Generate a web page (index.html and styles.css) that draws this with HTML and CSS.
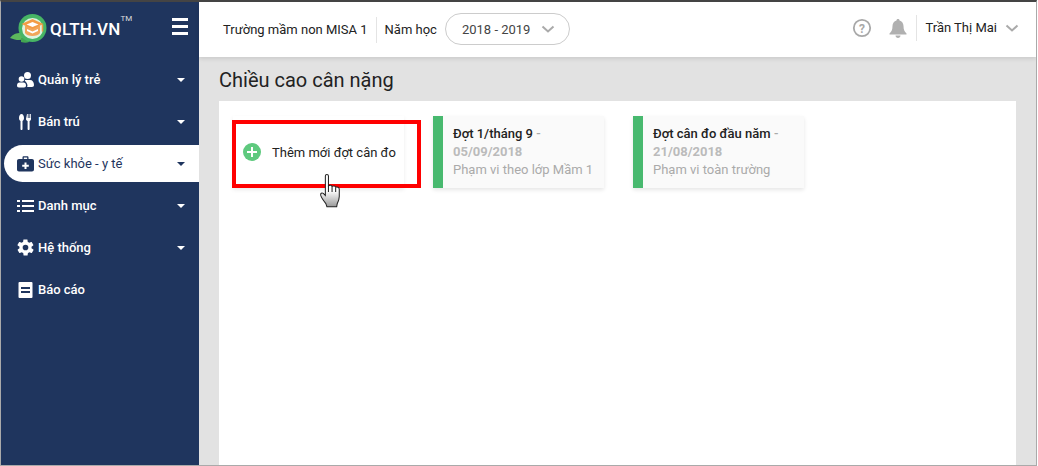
FILE: index.html
```html
<!DOCTYPE html>
<html lang="en">
<head>
  <meta charset="UTF-8" />
  <title>Chiều cao cân nặng</title>
  <link rel="stylesheet" href="styles.css">
</head>
<body>

<div class="window">
  <aside class="sidebar">
    <div class="brand">
      <svg class="logo" width="38" height="30" viewBox="0 0 38 30">
        <path d="M0 24c3-4 6-5 11-5l3 6c-4 2-9 1-14-1z" fill="#5cb85c"/>
        <path d="M11 28c3 1 6 1 8 0l-1-5-7 1z" fill="#43a651"/>
        <circle cx="22.500" cy="14" r="14" fill="#47b565"/>
        <circle cx="22.500" cy="14.500" r="10.500" fill="#dff3e2"/>
        <path d="M15 12h15v7c-2 4-13 4-15 0z" fill="#f2a65a"/>
        <path d="M22.500 5l11 5-11 5-11-5z" fill="#f39c45"/>
        <path d="M22.500 8l6 2.500-6 2.500-6-2.500z" fill="#fff"/>
        <path d="M17 15l5.500 2.500L28 15v2l-5.500 2.500L17 17z" fill="#fff"/>
        <path d="M32.500 10.500v7" stroke="#f39c45" stroke-width="1.500"/>
      </svg>
      <span class="brand-name">QLTH.VN</span>
      <span class="brand-tm">TM</span>
      <span class="burger"><i></i><i></i><i></i></span>
    </div>
    <nav class="menu">
      <a class="menu-item">
        <svg class="menu-icon" width="17" height="16" viewBox="0 0 17 16" fill="#fff">
          <circle cx="10.500" cy="3.500" r="3.500"/><circle cx="4.500" cy="7" r="2.800"/>
          <path d="M7 15.500H2c-1.500 0-2-.8-2-2 0-2 1-3 2.500-3h4c1.500 0 2.500 1 2.500 3 0 1-.6 2-2 2z"/>
          <path d="M10 15h5c1.300 0 2-.8 2-2 0-3-1.500-5-4-5H8.500c-.5 0-1 .5-.5 1 1.500 1 2.500 3 2.500 5z"/>
        </svg>
        <span class="menu-label">Quản lý trẻ</span><b class="caret"></b>
      </a>
      <a class="menu-item">
        <svg class="menu-icon" width="17" height="16" viewBox="0 0 17 16" fill="#fff">
          <path d="M4.500 0C3 0 2 2 2 4c0 1.500.7 2.500 1.500 3v8c0 .6.400 1 1 1s1-.4 1-1V7C6.300 6.500 7 5.500 7 4c0-2-1-4-2.500-4z"/>
          <path d="M10 0h.8v4h.8V0h.8v4h.8V0h.8v5c0 1-.6 1.700-1.400 2v8c0 .6-.4 1-1 1s-1-.4-1-1V7c-.8-.3-1.600-1-1.600-2z"/>
        </svg>
        <span class="menu-label">Bán trú</span><b class="caret"></b>
      </a>
      <a class="menu-item active">
        <svg class="menu-icon" width="17" height="16" viewBox="0 0 17 16">
          <path d="M5.500 3V1.500C5.500.7 6 .3 6.700.3h3.600c.7 0 1.200.4 1.200 1.200V3H15c1.200 0 2 .8 2 2v8.500c0 1.200-.8 2-2 2H2c-1.200 0-2-.8-2-2V5c0-1.200.8-2 2-2zm1.300 0h3.400V1.600H6.800z" fill="#1f355e"/>
          <path d="M7.500 6.500h2v2.300h2.300v2H9.500v2.300h-2v-2.300H5.200v-2h2.300z" fill="#fff"/>
        </svg>
        <span class="menu-label">Sức khỏe - y tế</span><b class="caret"></b>
      </a>
      <a class="menu-item">
        <svg class="menu-icon" width="17" height="16" viewBox="0 0 17 16" fill="#fff">
          <rect x="0" y="2" width="3" height="2"/><rect x="5" y="2" width="12" height="2"/>
          <rect x="0" y="7" width="3" height="2"/><rect x="5" y="7" width="12" height="2"/>
          <rect x="0" y="12" width="3" height="2"/><rect x="5" y="12" width="12" height="2"/>
        </svg>
        <span class="menu-label">Danh mục</span><b class="caret"></b>
      </a>
      <a class="menu-item">
        <svg class="menu-icon" width="17" height="17" viewBox="1.500 1.500 21 21" fill="#fff">
          <path d="M19.400 13c.1-.3.100-.7.100-1s0-.7-.1-1l2.100-1.600c.2-.2.300-.4.100-.7l-2-3.400c-.1-.2-.4-.3-.6-.2l-2.500 1c-.5-.4-1.100-.7-1.700-1l-.4-2.600c0-.3-.2-.5-.5-.5h-4c-.3 0-.5.200-.5.500l-.4 2.600c-.6.300-1.200.6-1.700 1l-2.500-1c-.2-.1-.5 0-.6.200l-2 3.400c-.2.300-.1.500.1.700L4.600 11c-.1.300-.1.700-.1 1s0 .7.100 1l-2.100 1.600c-.2.200-.3.400-.1.700l2 3.400c.1.200.4.300.6.200l2.500-1c.5.400 1.100.7 1.700 1l.4 2.600c0 .3.200.5.500.5h4c.3 0 .5-.2.500-.5l.4-2.600c.6-.3 1.200-.6 1.700-1l2.500 1c.2.100.5 0 .6-.2l2-3.400c.2-.3.100-.5-.1-.7zM12 15.500a3.500 3.500 0 1 1 0-7 3.500 3.500 0 0 1 0 7z"/>
        </svg>
        <span class="menu-label">Hệ thống</span><b class="caret"></b>
      </a>
      <a class="menu-item">
        <svg class="menu-icon" width="17" height="16" viewBox="0 0 17 16">
          <rect x="1.500" y="0" width="14" height="16" rx="1" fill="#fff"/>
          <rect x="4" y="5" width="9" height="2" fill="#1f355e"/>
          <rect x="4" y="9" width="9" height="2" fill="#1f355e"/>
        </svg>
        <span class="menu-label">Báo cáo</span>
      </a>
    </nav>
  </aside>

  <div class="main">
    <header class="topbar">
      <span class="school">Trường mầm non MISA 1</span>
      <span class="year-label">Năm học</span>
      <div class="year-select">
        <span>2018 - 2019</span>
        <svg width="14" height="8" viewBox="0 0 14 8"><path d="M1.500 1.500L7 6.500l5.500-5" fill="none" stroke="#aaa" stroke-width="2"/></svg>
      </div>
      <div class="topbar-right">
        <svg width="20" height="20" viewBox="0 0 20 20">
          <circle cx="10" cy="10" r="8.200" fill="none" stroke="#a8a8a8" stroke-width="1.800"/>
          <text x="10" y="14.500" text-anchor="middle" class="help-mark">?</text>
        </svg>
        <svg class="bell" width="18" height="19" viewBox="0 0 18 19" fill="#b0b0b0">
          <path d="M9 0c1 0 1.500.6 1.500 1.400C13 2 14.500 4.200 14.500 7c0 4 1 5.500 3 7.500v1H.5v-1c2-2 3-3.500 3-7.500 0-2.800 1.500-5 4-5.600C7.500.6 8 0 9 0z"/>
          <path d="M6.500 16.500h5C11.500 18 10.400 19 9 19s-2.500-1-2.500-2.500z"/>
        </svg>
        <span class="user">Trần Thị Mai</span>
        <svg width="14" height="8" viewBox="0 0 14 8"><path d="M1.500 1.500L7 6.500l5.500-5" fill="none" stroke="#aaa" stroke-width="2"/></svg>
      </div>
    </header>

    <div class="content">
      <h1 class="page-title">Chiều cao cân nặng</h1>
      <section class="panel">
        <div class="add-card">
          <span class="plus"></span>
          <span>Thêm mới đợt cân đo</span>
          <div class="highlight"></div>
          <svg class="hand" width="22" height="34" viewBox="0.500 0.500 19 33">
            <defs>
              <linearGradient id="handFill" x1="0" y1="0" x2="0" y2="1">
                <stop offset="0.500" stop-color="#fff"/><stop offset="1" stop-color="#999"/>
              </linearGradient>
            </defs>
            <path d="M5.500 2.500c0-2 3-2 3 0V12c1.500-1 3-.8 3.500.5 1.500-.8 3-.5 3.500.8 1.500-.6 3.500 0 3.500 2v7c0 3-1 5-2 7l-.5 3H7l-1-3c-2-2.500-4-5-5-8-.5-2 1-3 2.500-2l2 2z" fill="url(#handFill)" stroke="#222" stroke-width="1"/>
            <path d="M8.500 12v6M12 12.500V18M15.500 13.500V18" stroke="#222" stroke-width="1" fill="none"/>
          </svg>
        </div>
        <div class="round-card">
          <div class="round-title">Đợt 1/tháng 9 <span class="dash">-</span></div>
          <div class="round-date">05/09/2018</div>
          <div class="round-scope">Phạm vi theo lớp Mầm 1</div>
        </div>
        <div class="round-card">
          <div class="round-title">Đợt cân đo đầu năm <span class="dash">-</span></div>
          <div class="round-date">21/08/2018</div>
          <div class="round-scope">Phạm vi toàn trường</div>
        </div>
      </section>
    </div>
  </div>
</div>

</body>
</html>
```

FILE: styles.css
```css
html, body {
  margin: 0;
  padding: 0;
  background: #fff;
}

body {
  font-family: Roboto, 'Liberation Sans', sans-serif;
  font-size: 13px;
  color: #222;
}

.window {
  display: flex;
  box-sizing: border-box;
  width: 1037px;
  height: 466px;
  overflow: hidden;
  border-top: 2px solid #444;
  border-left: 1px solid #aaa;
  border-right: 1px solid #aaa;
  border-bottom: 1px solid #aaa;
}

.sidebar {
  width: 198px;
  flex-shrink: 0;
  background: #1f355e;
  color: #fff;
}

.brand {
  display: flex;
  align-items: center;
  position: relative;
  height: 55px;
  padding-left: 9px;
}

.logo {
  margin-top: -1px;
}

.brand-name {
  margin-left: 2px;
  margin-top: -2px;
  font-size: 17px;
  font-weight: 500;
  letter-spacing: 0.2px;
}

.brand-tm {
  align-self: flex-start;
  margin-top: 12px;
  font-size: 8px;
  color: #ddd;
}

.burger {
  display: flex;
  flex-direction: column;
  gap: 4px;
  margin-left: auto;
  margin-right: 11px;
  margin-top: -7px;
}

.burger i {
  display: block;
  width: 16px;
  height: 3px;
  background: #fff;
}

.menu {
  padding-top: 4px;
}

.menu-item {
  display: flex;
  align-items: center;
  height: 37px;
  margin: 0 0 5px 3px;
  padding-left: 13px;
  border-radius: 19px 0 0 19px;
  font-size: 13px;
  font-weight: 500;
}

.menu-item.active {
  background: #fff;
  color: #1f355e;
  font-weight: 400;
}

.menu-icon {
  flex-shrink: 0;
  margin-right: 4px;
}

.caret {
  margin-left: auto;
  margin-right: 14px;
  border-left: 4px solid transparent;
  border-right: 4px solid transparent;
  border-top: 4px solid currentColor;
}

.main {
  flex: 1;
  display: flex;
  flex-direction: column;
  min-width: 0;
}

.topbar {
  display: flex;
  align-items: center;
  flex-shrink: 0;
  height: 55px;
  padding-left: 24px;
  background: #fff;
  box-shadow: 0 2px 4px rgba(0,0,0,0.1);
  position: relative;
}

.school {
  padding-right: 8px;
  border-right: 1px solid #e4e4e4;
  line-height: 26px;
}

.year-label {
  margin-left: 8px;
}

.year-select {
  display: flex;
  align-items: center;
  justify-content: space-between;
  box-sizing: border-box;
  width: 125px;
  height: 32px;
  margin-left: 8px;
  margin-top: -1px;
  padding: 0 14px 0 16px;
  border: 1px solid #ccc;
  border-radius: 16px;
  color: #444;
}

.topbar-right {
  display: flex;
  align-items: center;
  margin-left: auto;
  margin-top: -3px;
  padding-right: 17px;
}

.help-mark {
  font-family: Roboto, sans-serif;
  font-size: 12px;
  font-weight: 700;
  fill: #a8a8a8;
}

.bell {
  margin-left: 17px;
}

.user {
  margin-left: 9px;
  padding-left: 8px;
  margin-right: 8px;
  border-left: 1px solid #e4e4e4;
  line-height: 26px;
}

.content {
  flex: 1;
  padding: 0 20px 0 20px;
  background: #e2e2e2;
}

.page-title {
  margin: 0;
  padding-top: 10px;
  height: 34px;
  font-size: 20px;
  font-weight: 400;
  line-height: 26px;
  color: #222;
}

.panel {
  display: flex;
  align-items: flex-start;
  gap: 29px;
  height: 400px;
  padding: 15px 14px;
  background: #fff;
}

.add-card {
  display: flex;
  align-items: center;
  position: relative;
  box-sizing: border-box;
  width: 171px;
  height: 72px;
  padding-left: 10px;
  background: #fff;
  box-shadow: 0 2px 4px rgba(0,0,0,0.08);
  color: #222;
}

.plus {
  position: relative;
  flex-shrink: 0;
  width: 18px;
  height: 18px;
  margin-right: 11px;
  border-radius: 50%;
  background: #5ec97e;
}

.plus::before,
.plus::after {
  content: "";
  position: absolute;
  background: #fff;
}

.plus::before {
  left: 4px;
  top: 8px;
  width: 10px;
  height: 2px;
}

.plus::after {
  left: 8px;
  top: 4px;
  width: 2px;
  height: 10px;
}

.highlight {
  position: absolute;
  left: -1px;
  top: 4px;
  box-sizing: border-box;
  width: 189px;
  height: 68px;
  border: 4px solid #f00;
}

.hand {
  position: absolute;
  left: 86px;
  top: 58px;
}

.round-card {
  box-sizing: border-box;
  width: 171px;
  height: 72px;
  padding: 9px 8px 0 10px;
  border-left: 10px solid #48b96f;
  background: #fafafa;
  box-shadow: 0 2px 4px rgba(0,0,0,0.1);
  line-height: 18px;
  white-space: nowrap;
}

.round-title {
  font-weight: 500;
  color: #222;
}

.dash {
  color: #aaa;
}

.round-date {
  font-weight: 700;
  color: #bbb;
}

.round-scope {
  color: #aaa;
}
```
